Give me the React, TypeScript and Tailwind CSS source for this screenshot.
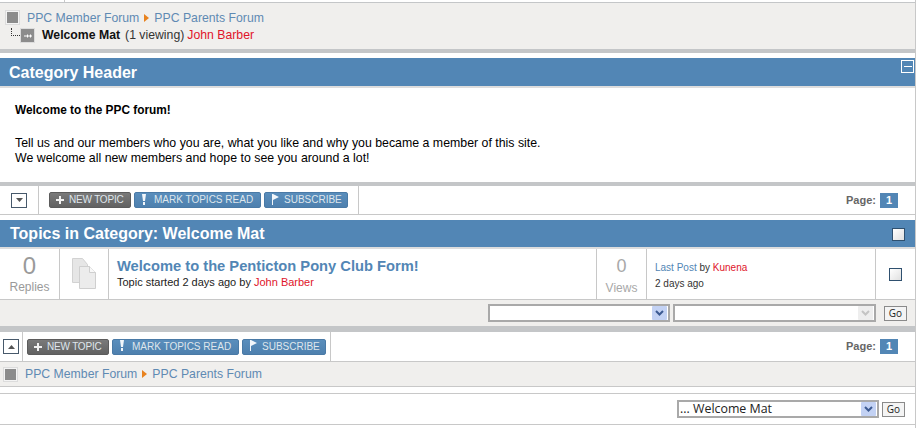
const SANS = "font-['Liberation_Sans',Arial,sans-serif]";

function HomeIcon() {
  return (
    <span className="flex h-[15px] w-[15px] items-center justify-center border border-[#dcdcdc] bg-[#f4f4f4]">
      <span className="h-[11px] w-[11px] bg-[#8c8c8c]" />
    </span>
  );
}

function Breadcrumb() {
  return (
    <div className="flex items-center text-[12.25px] leading-[14px] text-[#5f8ab3]">
      <span>PPC Member Forum</span>
      <svg width="5" height="8" viewBox="0 0 5 8" className="mx-[5px]">
        <path d="M0 0 L5 4 L0 8 Z" fill="#e8821e" />
      </svg>
      <span>PPC Parents Forum</span>
    </div>
  );
}

function ToolButton({ kind, label, w }: { kind: "new" | "mark" | "sub"; label: string; w: string }) {
  const bg =
    kind === "new"
      ? "from-[#7a7a7a] to-[#626262] border-[#5c5c5c]"
      : "from-[#5a8ebc] to-[#4e80ae] border-[#4a7aa6]";
  return (
    <div className={`flex h-[16px] items-center rounded-[2px] border bg-gradient-to-b text-[10px] leading-none text-[#dfe6ec] ${bg} ${w}`}>
      {kind === "new" && (
        <svg width="8" height="8" viewBox="0 0 8 8" className="ml-[6px] mr-[5px]">
          <path d="M3 0h2v3h3v2H5v3H3V5H0V3h3z" fill="#f2f2f2" />
        </svg>
      )}
      {kind === "mark" && (
        <svg width="6" height="11" viewBox="0 0 6 11" className="ml-[6px] mr-[7px] mb-[2px]">
          <path d="M1 0h4L4 7H2zM2 8h2v3H2z" fill="#f2f6fa" />
        </svg>
      )}
      {kind === "sub" && (
        <svg width="7" height="11" viewBox="0 0 7 11" className="ml-[7px] mr-[5px] mb-[2px]">
          <path d="M0 0h1v11H0zM1 0l6 3-6 3z" fill="#f2f6fa" />
        </svg>
      )}
      <span className={kind === "new" ? "tracking-[-0.2px]" : ""}>{label}</span>
    </div>
  );
}

function Toolbar({ up, pad, btnPad, height }: { up?: boolean; pad: string; btnPad: string; height: string }) {
  return (
    <div className={`flex items-center border-b border-b-[#c8c8c8] bg-white ${height}`}>
      <div className={`flex h-full items-center border-r border-r-[#c8c8c8] ${pad}`}>
        <span className="flex h-[15px] w-[16px] items-center justify-center border border-[#47596b] bg-white">
          <svg width="7" height="4" viewBox="0 0 7 4" className={up ? "rotate-180" : ""}>
            <path d="M0 0h7L3.500 4z" fill="#555" />
          </svg>
        </span>
      </div>
      <div className={`flex h-full items-center gap-[3px] border-r border-r-[#c8c8c8] ${btnPad}`}>
        <ToolButton kind="new" label="NEW TOPIC" w="w-[82px]" />
        <ToolButton kind="mark" label="MARK TOPICS READ" w="w-[127px]" />
        <ToolButton kind="sub" label="SUBSCRIBE" w="w-[84px]" />
      </div>
      <div className="ml-auto mr-[17px] flex items-center gap-[4px]">
        <span className="text-[11px] font-bold text-[#666]">Page:</span>
        <span className="flex h-[15px] w-[18px] items-center justify-center bg-[#5286b5] text-[11px] font-bold text-white">1</span>
      </div>
    </div>
  );
}

function SelectBox({ w, text, disabled }: { w: string; text?: string; disabled?: boolean }) {
  return (
    <div className={`flex h-[18px] items-center justify-between border-2 border-[#a9a9a9] bg-white pr-[1px] ${w}`}>
      <span className="pl-[1px] font-['Open_Sans',sans-serif] text-[12.4px] leading-none text-[#222]">{text}</span>
      <span className={`flex h-[14px] w-[15px] items-center justify-center rounded-[1px] ${disabled ? "bg-[#eeeeee]" : "bg-[#c3d2f4]"}`}>
        <svg width="9" height="6" viewBox="0 0 9 6">
          <path d="M1 1l3.500 3.500L8 1" fill="none" strokeWidth="2" stroke={disabled ? "#c4c4c4" : "#3c5a92"} />
        </svg>
      </span>
    </div>
  );
}

function GoButton() {
  return (
    <span className="flex h-[15px] w-[23px] items-center justify-center border border-[#8a8a8a] bg-[#f4f4f4] font-['Open_Sans',sans-serif] text-[10px] text-[#222]">
      Go
    </span>
  );
}

function Checkbox({ size }: { size: string }) {
  return <span className={`block border border-[#2f506f] bg-gradient-to-br from-white to-[#e0e0e0] ${size}`} />;
}

export default function App() {
  return (
    <div className={`h-[428px] w-[917px] overflow-hidden bg-white ${SANS}`}>
      <div className="h-[428px] w-[916px] border-r border-r-[#c8c8c8]">
        <div className="h-[2px] w-[65px] border-r border-r-[#c8c8c8]" />

        {/* top pathway */}
        <div className="h-[51px] border-t border-t-[#c4c6c8] border-b-4 border-b-[#c4c6c8] bg-[#f0efed] pl-[5px] pt-[7px]">
          <div className="flex items-center gap-[7px]">
            <HomeIcon />
            <Breadcrumb />
          </div>
          <div className="mt-[3px] flex items-center text-[12.25px] leading-[15px]">
            <span className="mb-[7px] ml-[6px] h-[8px] w-[9px] border-b border-l border-dotted border-[#333]" />
            <span className="flex h-[15px] w-[15px] items-center justify-center border border-[#dcdcdc] bg-[#8c8c8c]">
              <svg width="8" height="6" viewBox="0 0 8 6">
                <path d="M0 2.500h3v1H0zM3 1l2 2-2 2zM5 2.500h1v1H5zM6 1l2 2-2 2z" fill="#fff" />
              </svg>
            </span>
            <span className="ml-[7px] font-bold text-[#111]">Welcome Mat</span>
            <span className="ml-[5px] text-[#333]">(1 viewing)</span>
            <span className="ml-[3px] text-[#e0142a]">John Barber</span>
          </div>
        </div>

        {/* category header */}
        <div className="mt-[5px] flex h-[30px] items-start justify-between border-b-2 border-b-[#dddddd] bg-[#5286b5] pl-[9px]">
          <span className="pt-[5px] text-[16px] font-bold leading-[19px] text-white">Category Header</span>
          <span className="mr-[1px] mt-[2px] flex h-[13px] w-[13px] items-center justify-center border border-white">
            <span className="h-[1px] w-[8px] bg-white" />
          </span>
        </div>
        <div className="h-[94px] pl-[15px] pt-[15px] text-[12.35px] leading-[15px] text-black">
          <p className="text-[11.85px] font-bold">Welcome to the PPC forum!</p>
          <p className="mt-[18px]">Tell us and our members who you are, what you like and why you became a member of this site.</p>
          <p>We welcome all new members and hope to see you around a lot!</p>
        </div>

        <div className="h-[4px] bg-[#c4c6c8]" />
        <Toolbar pad="pl-[11px] pr-[11px]" btnPad="pl-[10px] pr-[10px]" height="h-[29px]" />

        {/* topics */}
        <div className="mt-[5px] flex h-[29px] items-start justify-between border-b-2 border-b-[#dddddd] bg-[#5286b5] pl-[10px]">
          <span className="pt-[4px] text-[16px] font-bold leading-[19px] text-white">Topics in Category: Welcome Mat</span>
          <span className="mr-[10px] mt-[8px]"><Checkbox size="h-[13px] w-[13px]" /></span>
        </div>
        <div className="flex h-[51px] border-b border-b-[#c8c8c8]">
          <div className="flex w-[60px] flex-col items-center border-r border-r-[#c8c8c8] pt-[3px] text-[#9a9a9a]">
            <span className="text-[24px] leading-[28px]">0</span>
            <span className="text-[12px] leading-[14px]">Replies</span>
          </div>
          <div className="flex w-[49px] items-center justify-center border-r border-r-[#c8c8c8]">
            <svg width="26" height="32" viewBox="0 0 26 32" className="ml-[1px]">
              <path d="M.500.500h10l5 6v18H.500z" fill="#e6e6e6" stroke="#d2d2d2" />
              <path d="M7.500 8.500h10l6 6v16h-16z" fill="#ececec" stroke="#cfcfcf" />
              <path d="M17.500 8.500v6h6" fill="#f8f8f8" stroke="#cfcfcf" />
            </svg>
          </div>
          <div className="w-[488px] border-r border-r-[#c8c8c8] pl-[8px] pt-[9px]">
            <div className="text-[14.7px] font-bold leading-[17px] text-[#5286b5]">Welcome to the Penticton Pony Club Form!</div>
            <div className="text-[11px] leading-[14px] text-[#222]">
              Topic started 2 days ago by <span className="text-[#e0142a]">John Barber</span>
            </div>
          </div>
          <div className="flex w-[50px] flex-col items-center border-r border-r-[#c8c8c8] pt-[7px] text-[#a8a8a8]">
            <span className="text-[18px] leading-[21px]">0</span>
            <span className="mt-[4px] text-[12px] leading-[14px]">Views</span>
          </div>
          <div className="w-[229px] border-r border-r-[#c8c8c8] pl-[8px] pt-[11px] text-[10px] leading-[16px] text-[#333]">
            <div>
              <span className="text-[#5286b5]">Last Post</span> by <span className="text-[#e0142a]">Kunena</span>
            </div>
            <div>2 days ago</div>
          </div>
          <div className="flex flex-1 items-center justify-center">
            <Checkbox size="h-[13px] w-[13px]" />
          </div>
        </div>

        {/* moderator row */}
        <div className="flex h-[26px] items-center justify-end gap-[3px] bg-[#f0efed] pr-[8px]">
          <SelectBox w="w-[182px]" />
          <SelectBox w="w-[203px]" disabled />
          <span className="ml-[5px] mt-[1px]"><GoButton /></span>
        </div>

        <div className="h-[6px] bg-[#c4c6c8]" />
        <Toolbar up pad="pl-[3px] pr-[3px]" btnPad="pl-[4px] pr-[4px]" height="h-[30px]" />

        {/* bottom pathway */}
        <div className="flex h-[25px] items-center gap-[7px] border-b border-b-[#c8c8c8] bg-[#f0efed] pl-[3px]">
          <HomeIcon />
          <Breadcrumb />
        </div>

        {/* jump box */}
        <div className="mt-[6px] flex h-[32px] items-center justify-end gap-[3px] border-y border-y-[#c8c8c8] bg-white pr-[10px]">
          <SelectBox w="w-[202px]" text="... Welcome Mat" />
          <GoButton />
        </div>
      </div>
    </div>
  );
}
